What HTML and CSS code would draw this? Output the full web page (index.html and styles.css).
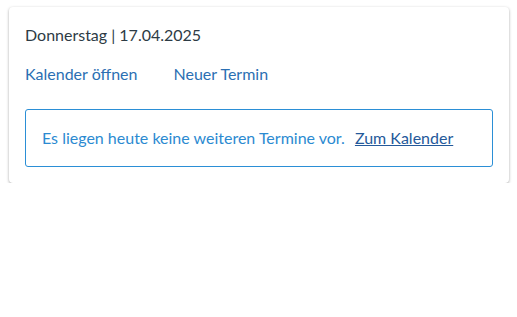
FILE: index.html
```html
<!DOCTYPE html>
<html lang="de">
<head>
    <meta charset="UTF-8">
    <title>Termine heute</title>
    <link rel="stylesheet" href="styles.css">
</head>
<body>
    <div class="karte">
        <div class="datum">Donnerstag | 17.04.2025</div>
        <div class="aktionen">
            <a href="#">Kalender öffnen</a>
            <a href="#">Neuer Termin</a>
        </div>
        <div class="hinweis">
            <span>Es liegen heute keine weiteren Termine vor.</span>
            <a href="#">Zum Kalender</a>
        </div>
    </div>
</body>
</html>
```

FILE: styles.css
```css
body {
    margin: 0;
    padding: 7px 8px 0 9px;
    font-family: Lato, 'Open Sans', sans-serif;
    font-size: 16px;
    line-height: 24px;
    background: #fff;
}

.karte {
    width: 500px;
    box-sizing: border-box;
    padding: 16px;
    background: #fff;
    border-radius: 4px;
    box-shadow: 0 1px 3px rgba(0, 0, 0, 0.35);
}

.datum {
    color: #2d3b45;
}

.aktionen {
    display: flex;
    gap: 36px;
    margin-top: 15px;
}

.aktionen a {
    color: #2b6fb3;
    text-decoration: none;
}

.hinweis {
    margin-top: 23px;
    padding: 16px 15px 16px 16px;
    border: 1px solid #2b8fd6;
    border-radius: 3px;
    color: #2b8ad1;
}

.hinweis a {
    margin-left: 6px;
    color: #24599a;
    text-decoration: underline;
}
```
